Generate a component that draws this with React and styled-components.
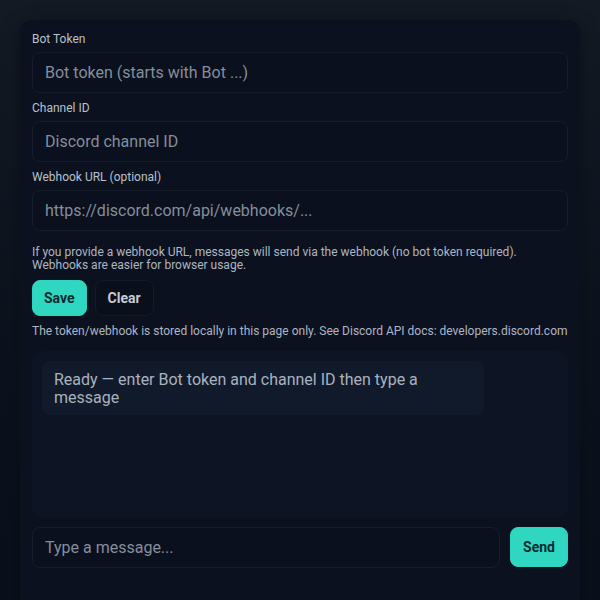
import React from "react";
import styled, { createGlobalStyle } from "styled-components";

const Global = createGlobalStyle`
  html, body { margin: 0; padding: 0; }
  body {
    background: linear-gradient(180deg, #131a24 0%, #0c121d 60%, #09101b 100%);
    min-height: 600px;
    font-family: Roboto, "Noto Sans", sans-serif;
    color: #c3cad5;
  }
  * { box-sizing: border-box; }
`;

const Page = styled.div`
  padding: 20px 20px 0 20px;
  height: 600px;
  overflow: hidden;
`;

const Card = styled.div`
  background: #0b111f;
  border-radius: 12px;
  padding: 12px 12px 40px;
  box-shadow: 0 4px 18px rgba(0, 0, 0, 0.35);
  display: flex;
  flex-direction: column;
`;

const Field = styled.div`
  display: flex;
  flex-direction: column;
  gap: 6px;
  margin-bottom: 8px;
`;

const Label = styled.label`
  font-size: 12px;
  line-height: 14px;
  color: #b9c1cd;
`;

const Input = styled.input`
  height: 41px;
  width: 100%;
  background: #0a101d;
  border: 1px solid #161e2c;
  border-radius: 8px;
  padding: 0 12px;
  font-family: Roboto, "Noto Sans", sans-serif;
  font-size: 16px;
  color: #d0d6df;
  outline: none;
  &::placeholder { color: #858e9b; }
`;

const Help = styled.p`
  margin: 7px 0 8px;
  font-size: 12px;
  line-height: 13px;
  color: #aeb6c2;
`;

const Buttons = styled.div`
  display: flex;
  gap: 8px;
`;

const Button = styled.button`
  height: ${(p) => p.$h || 36}px;
  padding: 0 ${(p) => p.$px || 12}px;
  border-radius: 8px;
  font-family: Roboto, "Noto Sans", sans-serif;
  font-weight: 700;
  font-size: 14px;
  cursor: pointer;
  border: 1px solid ${(p) => (p.$primary ? "#2dd4bf" : "#131a28")};
  background: ${(p) => (p.$primary ? "#2fd6c0" : "#0a0f1c")};
  color: ${(p) => (p.$primary ? "#0a2b2e" : "#c6ccd6")};
`;

const Note = styled.p`
  margin: 8px 0 13px;
  font-size: 12px;
  line-height: 14px;
  color: #aeb6c2;
`;

const Messages = styled.div`
  height: 167px;
  background: #0d1424;
  border-radius: 10px;
  padding: 10px;
  display: flex;
  flex-direction: column;
  align-items: flex-start;
`;

const Bubble = styled.div`
  width: 442px;
  background: #111a2a;
  border-radius: 8px;
  padding: 10px 12px 8px;
  font-size: 16px;
  line-height: 18px;
  color: #a9b2bf;
`;

const Composer = styled.div`
  display: flex;
  gap: 10px;
  margin-top: 9px;
`;

export default function App() {
  return (
    <>
      <Global />
      <Page>
        <Card>
          <Field>
            <Label>Bot Token</Label>
            <Input placeholder="Bot token (starts with Bot ...)" />
          </Field>
          <Field>
            <Label>Channel ID</Label>
            <Input placeholder="Discord channel ID" />
          </Field>
          <Field>
            <Label>Webhook URL (optional)</Label>
            <Input placeholder="https://discord.com/api/webhooks/..." />
          </Field>
          <Help>
            If you provide a webhook URL, messages will send via the webhook (no bot token required).
            <br />
            Webhooks are easier for browser usage.
          </Help>
          <Buttons>
            <Button $primary $px={11}>Save</Button>
            <Button $px={12}>Clear</Button>
          </Buttons>
          <Note>
            The token/webhook is stored locally in this page only. See Discord API docs: developers.discord.com
          </Note>
          <Messages>
            <Bubble>Ready — enter Bot token and channel ID then type a message</Bubble>
          </Messages>
          <Composer>
            <Input placeholder="Type a message..." />
            <Button $primary $h={40} $px={12}>Send</Button>
          </Composer>
        </Card>
      </Page>
    </>
  );
}
